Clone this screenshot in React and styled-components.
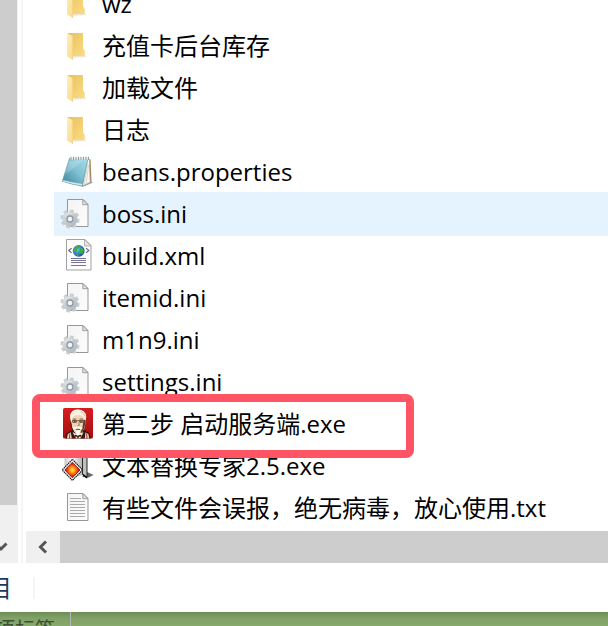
import React from 'react';
import styled, { createGlobalStyle, ThemeProvider } from 'styled-components';

const theme = {
  text: '#000000',
  hover: '#e5f3ff',
  track: '#f0f0f0',
  thumb: '#cdcdcd',
  line: '#f5f5f5',
  callout: '#ff5464',
  status: '#1e395b',
};

const files = [
  { name: 'wz', type: 'folder' },
  { name: '充值卡后台库存', type: 'folder' },
  { name: '加载文件', type: 'folder' },
  { name: '日志', type: 'folder' },
  { name: 'beans.properties', type: 'notepad' },
  { name: 'boss.ini', type: 'ini', hovered: true },
  { name: 'build.xml', type: 'xml' },
  { name: 'itemid.ini', type: 'ini' },
  { name: 'm1n9.ini', type: 'ini' },
  { name: 'settings.ini', type: 'ini' },
  { name: '第二步 启动服务端.exe', type: 'portrait', marked: true },
  { name: '文本替换专家2.5.exe', type: 'replacer' },
  { name: '有些文件会误报，绝无病毒，放心使用.txt', type: 'txt' },
];

const App = () => {
  return (
    <ThemeProvider theme={theme}>
      <GlobalStyle />
      <Page>
        <Gradients />
        <Explorer>
          <NavScrollbar>
            <NavThumb />
            <NavButton aria-label="Scroll down">
              <Chevron direction="down" />
            </NavButton>
          </NavScrollbar>
          <Splitter />
          <Content>
            <FileList>
              {files.map((file) => (
                <FileRow key={file.name} $hovered={file.hovered}>
                  <FileIcon type={file.type} />
                  <FileName>{file.name}</FileName>
                  {file.marked && <Callout />}
                </FileRow>
              ))}
            </FileList>
            <ListScrollbar>
              <ListButton aria-label="Scroll left">
                <Chevron direction="left" />
              </ListButton>
              <ListThumb />
            </ListScrollbar>
          </Content>
        </Explorer>
        <StatusBar>
          <StatusCount>个项目</StatusCount>
          <StatusDivider />
        </StatusBar>
        <Sheet>
          <SheetLabel>选项标签</SheetLabel>
        </Sheet>
      </Page>
    </ThemeProvider>
  );
};

export default App;

const Chevron = ({ direction }) => (
  <svg width="14" height="14" viewBox="0 0 14 14" fill="none" stroke="#555" strokeWidth="3" aria-hidden="true">
    {direction === 'left' ? <path d="M10 1.5 4.5 7l5.5 5.5" /> : <path d="M1.5 4.5 7 10l5.5-5.5" />}
  </svg>
);

// shared by every icon, so they are defined once
const Gradients = () => (
  <Defs width="0" height="0" aria-hidden="true">
    <defs>
      <linearGradient id="folderBack" x1="0" x2="1" y1="0" y2="1">
        <stop offset="0" stopColor="#e9c15e" />
        <stop offset="1" stopColor="#fbdc83" />
      </linearGradient>
      <linearGradient id="folderFront" x1="0" x2="1" y1="0" y2="1">
        <stop offset="0" stopColor="#fff0b8" />
        <stop offset="1" stopColor="#f8d989" />
      </linearGradient>
      <linearGradient id="cover" x1="1" x2="0" y1="0" y2="1">
        <stop offset="0" stopColor="#a9dfe9" />
        <stop offset="0.45" stopColor="#80c1d1" />
        <stop offset="1" stopColor="#347f98" />
      </linearGradient>
      <linearGradient id="sheet" x1="0" x2="1" y1="0" y2="1">
        <stop offset="0" stopColor="#f4f4f4" />
        <stop offset="1" stopColor="#fcfcfc" />
      </linearGradient>
      <linearGradient id="gear" x1="0" x2="1" y1="0" y2="1">
        <stop offset="0" stopColor="#d9dcde" />
        <stop offset="0.5" stopColor="#c4cace" />
        <stop offset="1" stopColor="#b3bcc4" />
      </linearGradient>
      <radialGradient id="globe" cx="0.4" cy="0.4" r="0.7">
        <stop offset="0" stopColor="#66c3fb" />
        <stop offset="1" stopColor="#0c3d9c" />
      </radialGradient>
      <linearGradient id="red" x1="0" x2="0" y1="0" y2="1">
        <stop offset="0" stopColor="#d51d20" />
        <stop offset="1" stopColor="#a60d10" />
      </linearGradient>
      <linearGradient id="door" x1="0" x2="1" y1="0" y2="0">
        <stop offset="0" stopColor="#c8c8c8" />
        <stop offset="0.4" stopColor="#ffffff" />
        <stop offset="1" stopColor="#b4b4b4" />
      </linearGradient>
      <radialGradient id="gem">
        <stop offset="0" stopColor="#fff34a" />
        <stop offset="0.35" stopColor="#ff9b17" />
        <stop offset="0.75" stopColor="#ee2410" />
        <stop offset="1" stopColor="#b80d08" />
      </radialGradient>
    </defs>
  </Defs>
);

const Folder = () => (
  <>
    <path d="M6 3h15v15l1.8 3.2V26H10z" fill="url(#folderBack)" />
    <path d="M11 26h12.5l1.5.8-13 .9z" fill="#eee6d2" />
    <path d="M5 3l6 3.6V30l-6-3.6z" fill="url(#folderFront)" />
    <path d="M10.6 6.5V29.6" stroke="#efd07d" strokeWidth="0.8" />
  </>
);

const Notepad = () => (
  <>
    <path d="M18 30l12-4.6.6 1.4-9.6 4z" fill="#9a9a9a" />
    <path d="M26.5 3l2 .6 1 21.8-3 1.8z" fill="#9c7a42" />
    <path d="M25.6 2.5l1.8 1 .8 22.8L20.4 30z" fill="#f6f7f2" stroke="#a8a8a0" strokeWidth="0.7" />
    <path d="M25.6 8L22 28.6M26.6 9l-2.4 18.8" stroke="#c6ccc8" strokeWidth="0.7" />
    <path d="M7.6 2L26 2.2 20.2 30Q9 28.4.3 25.2z" fill="url(#cover)" stroke="#5b94a4" strokeWidth="0.6" />
    <path d="M7 5L21 4Q12 13 2.8 18z" fill="#fff" opacity="0.2" />
    <path d="M1 25.2q9 3 18.8 4.2l.6-1.4Q10 26.6 1.2 24z" fill="#d6e6e9" />
    <path d="M8 2.2H27" stroke="#edf2ef" strokeWidth="2.6" />
    <path d="M9 .8v3M11.5.8v3M14 .8v3M16.5.8v3M19 .8v3M21.5.8v3M24 .8v3M26.5.8v3" stroke="#72868a" strokeWidth="0.8" />
  </>
);

const Paper = () => (
  <>
    <path d="M5.5 1.5H21l5 5v22H5.5z" fill="url(#sheet)" stroke="#979797" />
    <path d="M20.8 1.5v5.2H26z" fill="#e2e2e2" stroke="#979797" strokeWidth="0.9" />
  </>
);

const teeth = [0, 45, 90, 135, 180, 225, 270, 315];

const Ini = () => (
  <>
    <Paper />
    <g fill="url(#gear)">
      {teeth.map((angle) => (
        <path key={angle} d="M5.6 16l.6-4.6h3.6l.6 4.6z" transform={`rotate(${angle + 12} 8 21)`} />
      ))}
    </g>
    <circle cx="8" cy="21" r="5.1" fill="none" stroke="url(#gear)" strokeWidth="4.6" />
    <path d="M3 18.4a5.6 5.6 0 0 1 7.4-2.4" fill="none" stroke="#dfe2e4" strokeWidth="1.4" />
    <circle cx="8" cy="21" r="3" fill="#f2f4f6" stroke="#8d9aa6" strokeWidth="1.3" />
  </>
);

const Xml = () => (
  <>
    <path d="M4.5-.5H23l6 6V30H4.5z" fill="#fcfcfc" stroke="#a2a2a2" />
    <path d="M22.5-.5V6H29z" fill="#e4e4e4" stroke="#a2a2a2" strokeWidth="0.8" />
    <circle cx="16.7" cy="10.8" r="5.9" fill="url(#globe)" />
    <path d="M12.6 8.1q2-3 5-2.6l-.6 2.4-2 1.4.2 2-2.4.6-1-1.4zM18.6 7.5l2 1 1.2 2.6-1.4 3-2-.8-1-2.4zM13.6 13.5l2.4.2 1 2-1.6.2z" fill="#3fae3d" />
    <path d="M9.6 8.1L6.8 10.5l2.8 2.4M24 8.1l2.8 2.4-2.8 2.4" fill="none" stroke="#666383" strokeWidth="1.2" />
    <path d="M9 18.5h15M9 20.5h15M9 22.5h15M9 25.5h15" stroke="#77738f" />
  </>
);

const Portrait = () => (
  <>
    <rect x="1" width="30" height="30.5" rx="1.5" fill="url(#red)" />
    <path d="M3.6 30.5l.8-5 5.6-3.4h12.4l5.2 3.2 1 5.2z" fill="#3a1511" />
    <path d="M5 30.5l.8-4.6 3-1.6 1 6.2zM23.4 24.4l3 1.6.8 4.5h-4.4z" fill="#e8dcc8" />
    <path d="M7.4 30.5l.4-5M25 30.5l-.4-5" stroke="#a51b18" strokeWidth="0.9" />
    <path d="M10.6 24.4l3.6 6.1h4l3.4-6z" fill="#e9dfcf" />
    {/* head, with the shaded side to the right */}
    <path d="M9 14L8 8.6Q8.6 2 15.6 1.6q7.4.2 8.6 7L23.4 15l-1 5.6-3 4.4-3.4 1.8-3.6-2.2-2.4-4.6z" fill="#ecd5b4" />
    <path d="M22 9.4l1.6 2-.4 4.4-1 4.8-3 4.4-.8-.4 2-4.8z" fill="#5e3d2b" />
    <path d="M9 13L8 8.4Q8.8 1.8 15.6 1.6q7.6.2 8.6 7l-.6 3.6-1.8-.8-.8-2.8-3.4-1.6-4.8.6-2 2-.4 3.4z" fill="#f8f1e2" />
    <path d="M18.6 3.2q3.6 1.4 4.4 5.4" fill="none" stroke="#c3b193" strokeWidth="0.7" />
    <path d="M10.6 11.2l3.6-.2M17.6 11l3.4.1" stroke="#6b4733" strokeWidth="0.8" />
    <path d="M10.4 12.4h4v2h-3.6zM17.2 12.4h4l-.4 2h-3z" fill="#d3b390" stroke="#4a2c20" strokeWidth="0.7" />
    <path d="M12 13.2h1.4M18.4 13.2h1.4" stroke="#21110c" />
    <path d="M14.6 12.6h2.4" stroke="#4a2c20" strokeWidth="0.7" />
    <path d="M16.6 14.6l.8 2.6-2 .6" fill="none" stroke="#936445" strokeWidth="0.8" />
    <path d="M10.6 20.8q1.4-2.4 5.2-2.4t5 2.2l-1.6.6-3.4-.8-3.4.8z" fill="#fffaf0" />
    <path d="M14 21.4h4" stroke="#6b3326" strokeWidth="0.9" />
    <path d="M13.8 22.2h4.4l-.6 3.8-1.6 2-1.6-2z" fill="#fffaf0" />
    <path d="M8.8 14.4l.8 5.2 2.2 4.4 1.6 1.4" fill="none" stroke="#40211a" />
    <path d="M12.4 27l2.8.2.8 1 .8-1 2.8-.2-1 1.8-1.8-.4-.4 2.1h-.8l-.4-2.1-1.8.4z" fill="#0f0909" />
  </>
);

const Replacer = () => (
  <>
    <path d="M20 27l5-5 6.5 3-5 2.6z" fill="#656565" />
    <path d="M2.5 1h18v24l-8 2.5-10-5z" fill="url(#door)" />
    <path d="M20.5 1l4.5 3v23.5l-4.5-3z" fill="#c0c0c0" stroke="#2b2b2b" />
    <path d="M21 24.5l4 3.4" stroke="#000" strokeWidth="1.4" />
    <path d="M10.4 9.4L20.6 20 10.4 30.4.2 20z" fill="#fff" stroke="#171717" strokeWidth="1.1" strokeDasharray="1.5 0.6" />
    <path d="M10.4 12.2L18 20l-7.6 7.8L2.8 20z" fill="url(#gem)" stroke="#7b0b09" strokeWidth="0.8" />
  </>
);

const Txt = () => (
  <>
    <Paper />
    <path d="M8 6.5h11M8 9.5h15M8 12.5h15M8 15.5h15M8 18.5h15M8 21.5h15M8 24.5h15" stroke="#aaa" />
  </>
);

const drawings = {
  folder: Folder,
  notepad: Notepad,
  ini: Ini,
  xml: Xml,
  portrait: Portrait,
  replacer: Replacer,
  txt: Txt,
};

const FileIcon = ({ type }) => {
  const Drawing = drawings[type];
  return (
    <IconBox viewBox="0 0 32 32" aria-hidden="true">
      <Drawing />
    </IconBox>
  );
};

const GlobalStyle = createGlobalStyle`
  body {
    margin: 0;
    background-color: #ffffff;
    font-family: "Open Sans", "Noto Sans CJK SC", sans-serif;
  }

  * {
    box-sizing: border-box;
  }
`;

const Defs = styled.svg`
  position: absolute;
`;

const Page = styled.div`
  min-height: 100vh;
  display: flex;
  flex-direction: column;
  overflow: hidden;
  color: ${({ theme }) => theme.text};
`;

const Explorer = styled.main`
  display: flex;
  overflow: hidden;
`;

const NavScrollbar = styled.div`
  width: 18px;
  flex-shrink: 0;
  display: flex;
  flex-direction: column;
  overflow: hidden;
  background-color: ${({ theme }) => theme.track};
`;

const NavThumb = styled.div`
  flex: 1;
  margin: 0 1px 24px 0;
  background-color: ${({ theme }) => theme.thumb};
`;

const NavButton = styled.button`
  width: 34px;
  height: 34px;
  margin-left: -16px;
  padding: 0;
  border: none;
  display: flex;
  align-items: center;
  justify-content: center;
  background-color: ${({ theme }) => theme.track};
`;

const Splitter = styled.div`
  width: 2px;
  flex-shrink: 0;
  margin: 0 3px;
  background-color: ${({ theme }) => theme.line};
`;

const Content = styled.section`
  flex: 1;
  min-width: 0;
`;

/* scrolled down, so the first row is cut by the top edge */
const FileList = styled.ul`
  margin: -18px 0 0;
  padding: 0 0 3px 28px;
  list-style: none;
`;

const FileRow = styled.li`
  position: relative;
  height: 44px;
  margin-bottom: -2px;
  padding-left: 8px;
  display: flex;
  align-items: center;
  gap: 8px;
  background-color: ${({ theme, $hovered }) => ($hovered ? theme.hover : 'transparent')};
`;

const IconBox = styled.svg`
  width: 32px;
  height: 32px;
  flex-shrink: 0;
  overflow: visible;
`;

const FileName = styled.span`
  font-size: 24px;
  line-height: 32px;
  white-space: nowrap;
`;

const Callout = styled.div`
  position: absolute;
  z-index: 1;
  top: -8px;
  left: -22px;
  width: 382px;
  height: 64px;
  border: 8px solid ${({ theme }) => theme.callout};
  border-radius: 8px;
`;

const ListScrollbar = styled.div`
  height: 32px;
  display: flex;
  background-color: ${({ theme }) => theme.track};
`;

const ListButton = styled.button`
  width: 34px;
  padding: 0;
  border: none;
  display: flex;
  align-items: center;
  justify-content: center;
  background-color: ${({ theme }) => theme.track};
`;

const ListThumb = styled.div`
  flex: 1;
  background-color: ${({ theme }) => theme.thumb};
`;

const StatusBar = styled.footer`
  height: 49px;
  display: flex;
  align-items: center;
`;

const StatusCount = styled.span`
  width: 12px;
  display: flex;
  justify-content: flex-end;
  font-size: 24px;
  line-height: 32px;
  white-space: nowrap;
  color: ${({ theme }) => theme.status};
`;

const StatusDivider = styled.div`
  width: 2px;
  height: 22px;
  margin-left: 21px;
  background-color: ${({ theme }) => theme.line};
`;

const Sheet = styled.div`
  height: 14px;
  flex-grow: 1;
  display: flex;
  overflow: hidden;
  background: linear-gradient(#6c8c56, #80a266 6px, #86a86b);
`;

const SheetLabel = styled.span`
  width: 71px;
  padding-right: 15px;
  display: flex;
  justify-content: flex-end;
  border-right: 1px solid #b5b5b5;
  font-size: 20px;
  line-height: 36px;
  white-space: nowrap;
  color: #3f4f36;
`;
